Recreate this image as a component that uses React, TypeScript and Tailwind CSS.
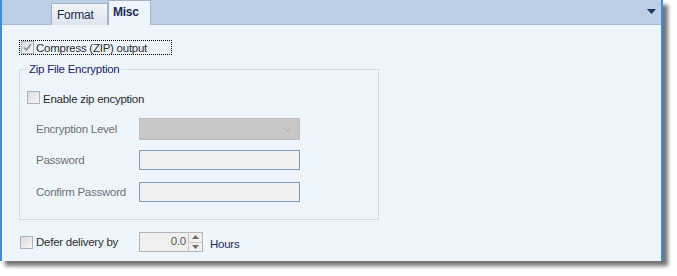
import { ChevronDown } from 'lucide-react'

const font = { fontFamily: '"Liberation Sans", Arial, sans-serif' }

function Check({ checked = false }: { checked?: boolean }) {
  return (
    <span className="flex h-[13px] w-[13px] shrink-0 items-center justify-center border border-[#a9b3c2] bg-gradient-to-br from-[#dcdcdc] to-[#f6f6f6]">
      {checked && (
        <svg width="9" height="9" viewBox="0 0 9 9">
          <path d="M1 4.5 L3.5 7 L8 1" fill="none" stroke="#8a8f99" strokeWidth="1.6" />
        </svg>
      )}
    </span>
  )
}

export default function App() {
  return (
    <div className="h-[276px] w-[677px] bg-white text-[11.5px] tracking-[-0.25px]" style={font}>
      <div className="flex h-[261px] w-[663px] flex-col border-x-2 border-[#3b8ddf] bg-[#eef5fd] shadow-[5px_5px_4px_rgba(0,0,0,0.55)]">
        {/* Tab strip */}
        <div className="relative flex h-[25px] items-end border-b border-[#a6bbd7] bg-[#bccfe5] pl-[49px]">
          <div className="mb-[-1px] flex h-[22px] w-[57px] items-center border border-b-0 border-[#a6b3c4] bg-gradient-to-b from-[#f3f6fa] to-[#dde5ef] pl-[5px] text-[12px] text-[#1d2a4a]">
            Format
          </div>
          <div className="mb-[-1px] flex h-[25px] w-[43px] items-center border border-b-0 border-[#a6b3c4] bg-[#eef5fd] pb-[2px] pl-[4px] text-[12px] font-bold text-[#1d2a52]">
            Misc
          </div>
          <svg className="absolute right-[5px] top-[9px]" width="9" height="5" viewBox="0 0 9 5">
            <path d="M0 0 H9 L4.5 5 Z" fill="#1f3658" />
          </svg>
        </div>

        {/* Content */}
        <div className="flex flex-col pl-[17px]">
          <div className="mt-[15px] flex h-[15px] w-[153px] items-center gap-[2px] border border-dotted border-black pl-[1px] text-[#2b2b2b]">
            <Check checked />
            <span className="translate-y-[1px] leading-none">Compress (ZIP) output</span>
          </div>

          <div className="relative mt-[14px] flex h-[151px] w-[360px] flex-col border border-[#d6dbe1] pl-[7px]">
            <span className="absolute left-[7px] top-[-8px] bg-[#eef5fd] px-[2px] leading-[14px] text-[#1c2266]">
              Zip File Encryption
            </span>
            <div className="mt-[21px] flex items-center gap-[3px] text-[#2b2b2b]">
              <Check />
              <span className="translate-y-[1.5px] leading-none">Enable zip encyption</span>
            </div>
            <div className="mt-[14px] flex items-center pl-[9px] text-[#707070]">
              <span className="w-[103px] translate-y-[1px]">Encryption Level</span>
              <div className="flex h-[22px] w-[161px] items-center justify-end border border-[#bdbdbd] bg-[#c8c8c8] pr-[5px]">
                <ChevronDown size={13} strokeWidth={1} color="#8c8c8c" />
              </div>
            </div>
            <div className="mt-[10px] flex items-center pl-[9px] text-[#707070]">
              <span className="w-[103px] translate-y-[1px]">Password</span>
              <div className="h-[20px] w-[161px] border border-[#7f9cc7] bg-[#f0f0f0]" />
            </div>
            <div className="mt-[12px] flex items-center pl-[9px] text-[#707070]">
              <span className="w-[103px] translate-y-[1px]">Confirm Password</span>
              <div className="h-[20px] w-[161px] border border-[#7f9cc7] bg-[#f0f0f0]" />
            </div>
          </div>

          <div className="mt-[12px] flex items-center pl-[1px]">
            <Check />
            <span className="ml-[3px] w-[103px] translate-y-[1px] text-[#2b2b2b]">Defer delivery by</span>
            <div className="flex h-[20px] w-[64px] items-center border border-[#b5b5b5] bg-[#f0f0f0]">
              <span className="flex-1 pr-[2px] text-right text-[#5a5a5a]">0.0</span>
              <div className="flex h-full w-[14px] flex-col border-l border-[#c9c9c9]">
                <div className="flex flex-1 items-center justify-center border-b border-[#c9c9c9]">
                  <svg width="7" height="4" viewBox="0 0 7 4"><path d="M0 4 L3.5 0 L7 4 Z" fill="#6b6b6b" /></svg>
                </div>
                <div className="flex flex-1 items-center justify-center">
                  <svg width="7" height="4" viewBox="0 0 7 4"><path d="M0 0 L3.5 4 L7 0 Z" fill="#6b6b6b" /></svg>
                </div>
              </div>
            </div>
            <span className="ml-[7px] translate-y-[3px] text-[#1c2a52]">Hours</span>
          </div>
        </div>
      </div>
    </div>
  )
}
